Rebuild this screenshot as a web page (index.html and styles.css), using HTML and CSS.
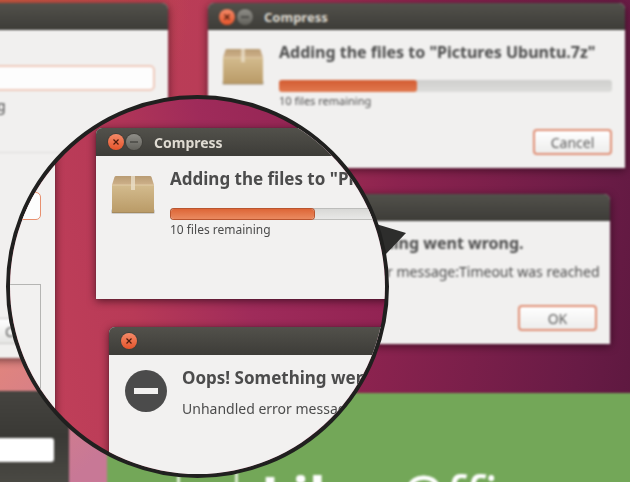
FILE: index.html
```html
<!DOCTYPE html>
<html lang="en">
<head>
    <meta charset="UTF-8">
    <meta name="viewport" content="width=device-width, initial-scale=1.0">
    <title>Desktop Magnifier</title>
    <link rel="stylesheet" href="styles.css">
</head>
<body>
    <svg class="defs" width="0" height="0" aria-hidden="true">
        <defs>
            <linearGradient id="box-front" x1="0" y1="0" x2="0" y2="1">
                <stop offset="0" stop-color="#d3bb8e"/>
                <stop offset="1" stop-color="#b99a66"/>
            </linearGradient>
            <linearGradient id="box-lid" x1="0" y1="0" x2="0" y2="1">
                <stop offset="0" stop-color="#b99c74"/>
                <stop offset="1" stop-color="#ceb18a"/>
            </linearGradient>
        </defs>
        <symbol id="package" viewBox="0 0 44 40">
            <rect x="0" y="34" width="44" height="5" rx="2" fill="#000" opacity="0.15"/>
            <path d="M5 1h34q1 0 1.500 1L43 10H1L3.500 2Q4 1 5 1z" fill="url(#box-lid)"/>
            <path d="M1 10h42v27q0 1-1 1H2q-1 0-1-1z" fill="url(#box-front)"/>
            <path d="M1 10h42" stroke="#e0cba5" stroke-width="1"/>
            <path d="M1 37.500h42" stroke="#a58a5c" stroke-width="1"/>
            <path d="M20 1h4v14h-4z" fill="#eadfc8" opacity="0.8"/>
        </symbol>
        <symbol id="close" viewBox="0 0 16 16">
            <path d="M5.500 5.500l5 5M10.500 5.500l-5 5" stroke="#4c1a0c" stroke-width="1.200" fill="none"/>
        </symbol>
        <symbol id="minimize" viewBox="0 0 16 16">
            <path d="M4 8h8" stroke="#33332f" stroke-width="1.200" fill="none"/>
        </symbol>
    </svg>

    <main class="desktop">
        <div class="wallpaper-light"></div>
        <div class="blurred">
            <section class="window open-window">
                <header class="titlebar"></header>
                <div class="form">
                    <input class="field" type="text" aria-label="Name">
                    <p class="hint">g</p>
                    <hr class="divider">
                    <button class="plain-btn" type="button">C</button>
                </div>
            </section>

            <section class="window compress-window">
                <header class="titlebar">
                    <button class="win-btn close-btn" type="button" aria-label="Close"><svg><use href="#close"/></svg></button>
                    <button class="win-btn" type="button" aria-label="Minimize"><svg><use href="#minimize"/></svg></button>
                    <span class="title">Compress</span>
                </header>
                <div class="content">
                    <svg class="icon"><use href="#package"/></svg>
                    <div class="details">
                        <h2>Adding the files to "Pictures Ubuntu.7z"</h2>
                        <div class="progress"><div class="bar" style="width: 41.500%"></div></div>
                        <p class="remaining">10 files remaining</p>
                        <button class="btn" type="button">Cancel</button>
                    </div>
                </div>
            </section>

            <section class="window error-window">
                <header class="titlebar"></header>
                <div class="content">
                    <div class="details">
                        <h2>Oops! Something went wrong.</h2>
                        <p class="message">Unhandled error message:Timeout was reached</p>
                        <button class="btn" type="button">OK</button>
                    </div>
                </div>
            </section>

            <section class="splash">
                <div class="splash-logo"></div>
                <p class="splash-name"><b>Libre</b>Office</p>
            </section>

            <section class="search-panel">
                <input class="search" type="text" aria-label="Search">
            </section>
        </div>

        <svg class="pointer" viewBox="0 0 30 32"><path d="M0 1L30 10L9 32z" fill="#2d2d2c"/></svg>

        <div class="lens">
            <section class="window lens-side">
                <input class="field" type="text" aria-label="Name">
                <div class="frame"></div>
            </section>

            <section class="window lens-compress">
                <header class="titlebar">
                    <button class="win-btn close-btn" type="button" aria-label="Close"><svg><use href="#close"/></svg></button>
                    <button class="win-btn" type="button" aria-label="Minimize"><svg><use href="#minimize"/></svg></button>
                    <span class="title">Compress</span>
                </header>
                <div class="content">
                    <svg class="icon"><use href="#package"/></svg>
                    <div class="details">
                        <h2>Adding the files to "Pictures Ubuntu.7z"</h2>
                        <div class="progress"><div class="bar" style="width: 41%"></div></div>
                        <p class="remaining">10 files remaining</p>
                    </div>
                </div>
            </section>

            <section class="window lens-error">
                <header class="titlebar">
                    <button class="win-btn close-btn" type="button" aria-label="Close"><svg><use href="#close"/></svg></button>
                </header>
                <div class="content">
                    <svg class="icon error-icon" viewBox="0 0 42 42"><circle cx="21" cy="21" r="21" fill="#4b4b4b"/><path d="M9 18h24v6H9z" fill="#f2f1f0"/></svg>
                    <div class="details">
                        <h2>Oops! Something went wrong.</h2>
                        <p class="message">Unhandled error message:Timeout was reached</p>
                    </div>
                </div>
            </section>
        </div>
    </main>
</body>
</html>
```

FILE: styles.css
```css
* {
    box-sizing: border-box;
}
body {
    margin: 0;
    font-family: "Noto Sans", "Open Sans", sans-serif;
    color: #4c4c4c;
}
h2, p {
    margin: 0;
    white-space: nowrap;
}
.defs {
    position: absolute;
}
.desktop {
    position: relative;
    height: 100vh;
    overflow: hidden;
    background: radial-gradient(circle at 0 0, #cf5a40 0, rgba(207, 90, 64, 0) 190px),
        linear-gradient(100deg, #bd3e54 0%, #b93c57 30%, #8c234f 60%, #681b45 90%, #5c183f 100%);
}
.wallpaper-light {
    position: absolute;
    left: 0;
    top: 350px;
    width: 120px;
    bottom: 0;
    background: linear-gradient(135deg, #e2857c, #c87896 80%);
}
.blurred {
    filter: blur(1px);
}

/* windows */
.window {
    position: absolute;
    background-color: #f1f0ef;
    border-radius: 6px 6px 0 0;
    box-shadow: 0 2px 8px rgba(20, 0, 10, 0.6);
}
.titlebar {
    display: flex;
    align-items: center;
    gap: 2px;
    height: 27px;
    padding: 0 11px;
    background: linear-gradient(#52514b, #3d3c38);
    border-radius: 6px 6px 0 0;
}
.title {
    margin-left: 9px;
    font-size: 13px;
    font-weight: bold;
    color: #dfdbd2;
}
.win-btn {
    width: 16px;
    height: 16px;
    padding: 0;
    border: none;
    border-radius: 50%;
    background: linear-gradient(#8f8e88, #62615b);
    box-shadow: 0 0 0 1px #403f3a;
}
.win-btn svg {
    display: block;
    width: 16px;
    height: 16px;
}
.close-btn {
    background: linear-gradient(#f58a68, #e4542b);
}
.content {
    display: flex;
    gap: 15px;
    padding: 11px 13px 13px 14px;
}
.icon {
    flex: none;
    width: 42px;
    height: 38px;
    margin-top: 7px;
}
.details {
    flex: 1;
    display: flex;
    flex-direction: column;
    min-width: 0;
}
h2 {
    font-size: 16px;
    line-height: 22px;
}
.progress {
    height: 12px;
    margin-top: 17px;
    background: linear-gradient(#cfcfcd, #dddddb);
    border-radius: 3px;
}
.bar {
    height: 100%;
    background: linear-gradient(#d35c32, #e17a50);
    border-radius: 3px;
}
.remaining {
    font-size: 11px;
    line-height: 18px;
}
.message {
    margin-top: 8px;
    font-size: 14px;
    line-height: 20px;
}
.btn {
    align-self: flex-end;
    width: 79px;
    height: 26px;
    margin-top: 19px;
    padding: 0;
    font-family: inherit;
    font-size: 14px;
    color: #5c5c5c;
    background: linear-gradient(#ffffff, #ededec);
    border: 2px solid #e08f75;
    border-radius: 4px;
}
.field {
    display: block;
    background-color: #fdfdfd;
    border: 2px solid #efcbbd;
    border-radius: 5px;
}

.open-window {
    left: -20px;
    top: 3px;
    width: 188px;
    height: 355px;
}
.open-window .form {
    padding: 35px 13px 0 10px;
}
.open-window .field {
    width: 100%;
    height: 26px;
}
.hint {
    margin: 5px 0 0 7px;
    font-size: 14px;
    line-height: 20px;
}
.divider {
    margin: 36px 0 0;
    border: none;
    border-top: 1px solid #dddcda;
}
.plain-btn {
    display: block;
    width: 70px;
    height: 26px;
    margin-top: 165px;
    padding: 0 0 0 14px;
    font-family: inherit;
    font-size: 14px;
    text-align: left;
    color: #5c5c5c;
    background: linear-gradient(#ffffff, #e6e6e4);
    border: 1px solid #c8c8c6;
    border-radius: 4px;
}
.compress-window {
    left: 208px;
    top: 3px;
    width: 417px;
}
.error-window {
    left: 210px;
    top: 194px;
    width: 400px;
}
.error-window .content {
    padding-left: 73px;
}
.error-window .btn {
    margin-top: 23px;
}

/* LibreOffice splash */
.splash {
    position: absolute;
    left: 107px;
    top: 393px;
    right: -10px;
    height: 160px;
    display: flex;
    gap: 23px;
    padding: 62px 0 0 70px;
    background-color: #73a758;
}
.splash-logo {
    width: 61px;
    height: 90px;
    border: 3px solid #dcecd2;
    border-top: none;
}
.splash-name {
    font-size: 56px;
    line-height: 80px;
    color: #fff;
}
.search-panel {
    position: absolute;
    left: -10px;
    top: 391px;
    width: 79px;
    height: 110px;
    padding: 47px 15px 0 0;
    background: linear-gradient(#454440, #3a3935 40%, #504f49);
    border-radius: 0 5px 0 0;
}
.search {
    display: block;
    width: 100%;
    height: 24px;
    background-color: #fff;
    border: none;
    border-radius: 3px;
}

/* magnifier */
.pointer {
    position: absolute;
    left: 376px;
    top: 223px;
    width: 30px;
    height: 32px;
}
.lens {
    position: absolute;
    left: 6px;
    top: 95px;
    width: 383px;
    height: 383px;
    overflow: hidden;
    border: 4px solid #20201f;
    border-radius: 50%;
    background: linear-gradient(75deg, #c4425a 0%, #b83a57 35%, #9f2b5a 60%, #8c2050 100%);
}
.lens .window {
    background-color: #f2f1f0;
    box-shadow: 0 2px 8px rgba(20, 0, 10, 0.6), 0 0 1px #333;
}
.lens .titlebar {
    height: 28px;
    padding-left: 12px;
}
.lens .title {
    margin-left: 10px;
    font-size: 14px;
}
.lens .content {
    gap: 15px;
    padding: 12px 15px;
}
.lens .icon {
    width: 44px;
    height: 40px;
    margin-top: 7px;
}
.lens h2 {
    font-size: 17px;
}
.lens .progress {
    margin-top: 18px;
    background: linear-gradient(#d8d8d6, #e8e8e7);
    border: 1px solid #bdbdbb;
}
.lens .bar {
    background: linear-gradient(#dd6637, #ea8a60);
    box-shadow: 0 0 0 1px #b9552f;
}
.lens .remaining {
    font-size: 12px;
    line-height: 20px;
}
.lens .error-icon {
    width: 42px;
    height: 42px;
    margin-top: 3px;
}
.lens-side {
    left: -30px;
    top: 0;
    width: 75px;
    height: 380px;
    padding: 93px 14px 0 0;
}
.lens-side .field {
    width: 100%;
    height: 28px;
    border: 1px solid #e8906f;
}
.lens-side .frame {
    height: 220px;
    margin-top: 64px;
    border: 1px solid #b5b5b3;
}
.lens-compress {
    left: 86px;
    top: 29px;
    width: 440px;
    height: 171px;
}
.lens-error {
    left: 99px;
    top: 228px;
    width: 430px;
    height: 180px;
}
.lens-error .content {
    padding-left: 16px;
}
.lens-error .message {
    margin-top: 10px;
}
```
